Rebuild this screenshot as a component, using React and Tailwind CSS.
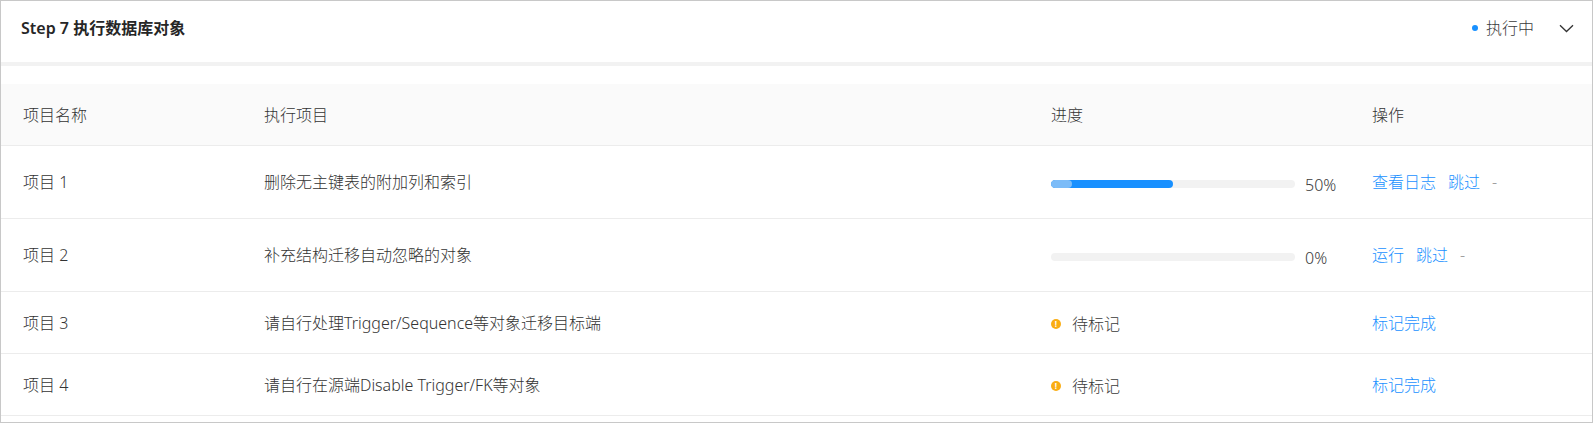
import React from 'react'

const rows = [
  { name: '项目 1', task: '删除无主键表的附加列和索引', kind: 'progress', pct: 50, actions: ['查看日志', '跳过'], dash: true },
  { name: '项目 2', task: '补充结构迁移自动忽略的对象', kind: 'progress', pct: 0, actions: ['运行', '跳过'], dash: true },
  { name: '项目 3', task: '请自行处理Trigger/Sequence等对象迁移目标端', kind: 'mark', actions: ['标记完成'] },
  { name: '项目 4', task: '请自行在源端Disable Trigger/FK等对象', kind: 'mark', actions: ['标记完成'] },
]

const cols = 'grid grid-cols-[241px_787px_321px_1fr]'

function Progress({ pct }) {
  return (
    <div className="flex items-center pt-[3px]">
      <div className="relative h-[8px] w-[244px] rounded-full bg-[#f2f2f2] overflow-hidden">
        {pct > 0 && (
          <div className="absolute left-0 top-0 h-full rounded-full bg-[#1890ff]" style={{ width: `${pct}%` }}>
            <div className="absolute left-0 top-0 h-full w-[21px] rounded-full bg-[#7cbcf8]" />
          </div>
        )}
      </div>
      <span className="ml-[10px] pt-[2px] text-[#3a3a3a]">{pct}%</span>
    </div>
  )
}

function Pending() {
  return (
    <div className="flex items-center pt-[2px]">
      <span className="flex h-[10px] w-[10px] items-center justify-center rounded-full bg-[#faad14] text-[8px] font-bold leading-none text-white">!</span>
      <span className="ml-[11px] text-[#3a3a3a]">待标记</span>
    </div>
  )
}

export default function App() {
  return (
    <div
      className="h-[423px] w-[1593px] border border-[#c8c8c8] bg-white text-[16px] font-light text-[#333]"
      style={{ fontFamily: '"Noto Sans", "Noto Sans CJK SC", sans-serif' }}
    >
      <div className="flex h-[61px] items-center justify-between pb-[7px] pl-[20px] pr-[18px]">
        <h2 className="font-semibold text-[#262626]">Step 7 执行数据库对象</h2>
        <div className="flex items-center">
          <span className="h-[6px] w-[6px] rounded-full bg-[#1890ff]" />
          <span className="ml-[8px] text-[#3a3a3a]">执行中</span>
          <svg className="ml-[25px]" width="15" height="9" viewBox="0 0 15 9" fill="none">
            <path d="M1 1.2L7.5 7.5L14 1.2" stroke="#333" strokeWidth="1.3" />
          </svg>
        </div>
      </div>
      <div className="h-[4px] bg-[#f2f2f2]" />
      <div className="pt-[18px]">
        <div className={`${cols} h-[62px] items-center border-b border-[#ececec] bg-[#fafafa] text-[#333]`}>
          <div className="pl-[22px]">项目名称</div>
          <div className="pl-[22px]">执行项目</div>
          <div className="pl-[22px]">进度</div>
          <div className="pl-[22px]">操作</div>
        </div>
        {rows.map((r) => (
          <div
            key={r.name}
            className={`${cols} items-center border-b border-[#ececec] text-[#333] ${r.kind === 'progress' ? 'h-[73px]' : 'h-[62px]'}`}
          >
            <div className="pl-[22px]">{r.name}</div>
            <div className="pl-[22px]">{r.task}</div>
            <div className="pl-[22px]">{r.kind === 'progress' ? <Progress pct={r.pct} /> : <Pending />}</div>
            <div className="flex items-center gap-3 pl-[22px]">
              {r.actions.map((a) => (
                <a key={a} className="cursor-pointer text-[#1890ff]">{a}</a>
              ))}
              {r.dash && <span className="text-[#999]">-</span>}
            </div>
          </div>
        ))}
      </div>
    </div>
  )
}
